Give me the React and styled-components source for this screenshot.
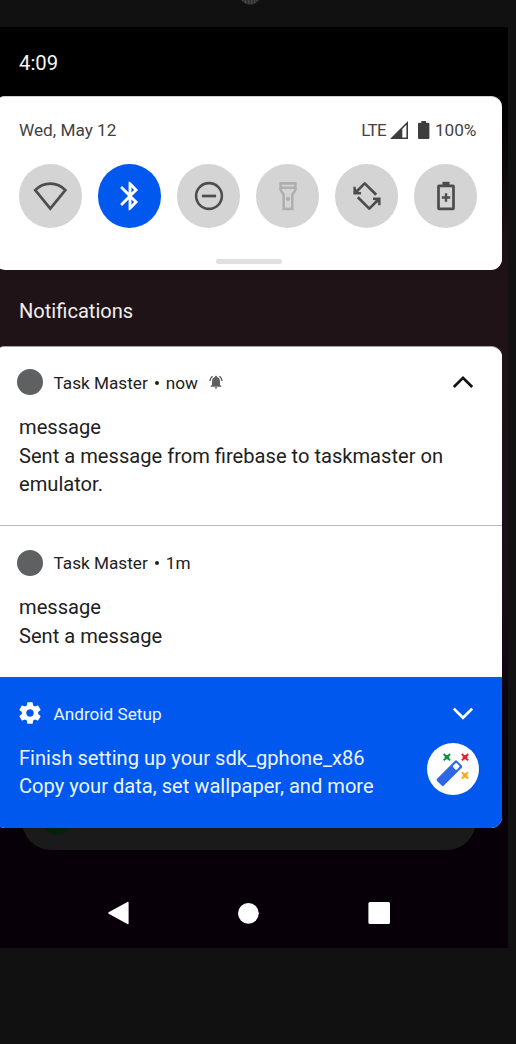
import React from "react";
import styled, { createGlobalStyle } from "styled-components";

const Global = createGlobalStyle`
  *, *::before, *::after { box-sizing: border-box; }
  body { margin: 0; background: #111111; font-family: Roboto, "Liberation Sans", sans-serif; }
  svg { display: block; flex: none; }
`;

const Device = styled.div`
  position: relative;
  width: 516px;
  height: 1044px;
  overflow: hidden;
  background: #111111;
  display: flex;
  flex-direction: column;
`;

const Bezel = styled.div`
  height: 27px;
  flex: none;
  display: flex;
  justify-content: center;
  overflow: hidden;
`;

const Speaker = styled.svg`
  margin-top: -18px;
  margin-left: -16px;
`;

const Screen = styled.main`
  position: relative;
  width: 508px;
  height: 921px;
  flex: none;
  overflow: hidden;
  display: flex;
  flex-direction: column;
  background: linear-gradient(180deg, #000 0, #000 70px, #1a1014 210px, #1f1317 255px, #1f1317 320px, #1a0f18 560px, #0b0310 680px, #070008 790px, #070008 100%);
`;

const StatusBar = styled.header`
  height: 69px;
  flex: none;
  padding: 24px 0 0 19px;
  font-size: 20.3px;
  line-height: 24px;
  color: #f4f4f4;
`;

const Panel = styled.section`
  width: 508px;
  height: 174.4px;
  flex: none;
  margin-left: -6px;
  padding: 21px 25px 0;
  border-radius: 11px;
  border-top: 1px solid #cfcfcf;
  background: #fff;
  display: flex;
  flex-direction: column;
`;

const InfoRow = styled.div`
  display: flex;
  justify-content: space-between;
  height: 24px;
  line-height: 24px;
  font-size: 17.2px;
  color: #424242;
`;

const Indicators = styled.div`
  display: flex;
  align-items: center;
`;

const Network = styled.span`
  font-size: 17px;
  letter-spacing: -0.6px;
  margin-right: 4px;
`;

const Percent = styled.span`
  margin-left: 5.5px;
  margin-right: 0.8px;
  letter-spacing: -0.1px;
`;

const Tiles = styled.div`
  display: flex;
  justify-content: space-between;
  margin-top: 22.3px;
  margin-right: -0.4px;
`;

const Tile = styled.button`
  width: 63.4px;
  height: 63.4px;
  padding: 0;
  border: 0;
  border-radius: 50%;
  display: flex;
  align-items: center;
  justify-content: center;
  background: ${(p) => (p.$active ? "#0058ef" : "#d4d4d4")};
  color: ${(p) => (p.$active ? "#fff" : p.$muted ? "#afafaf" : "#4d4d4d")};
`;

const Handle = styled.div`
  width: 66px;
  height: 4.6px;
  border-radius: 2.3px;
  margin: 31.4px auto 0 197px;
  background: #e0e0e0;
`;

const SectionTitle = styled.h2`
  margin: 0;
  height: 75.6px;
  flex: none;
  padding: 29px 0 0 19px;
  font-size: 20.1px;
  line-height: 24px;
  font-weight: 400;
  color: #f1eef0;
`;

const Stack = styled.section`
  position: relative;
  width: 508px;
  flex: none;
  margin-left: -6px;
  border-radius: 11px;
  border-top: 1px solid #a8a4a6;
  overflow: hidden;
  background: #fff;
`;

const Card = styled.article`
  height: ${(p) => p.$height}px;
  padding: ${(p) => p.$pad || 23}px 25px 0 22.5px;
  color: ${(p) => (p.$accent ? "#eef4ff" : "#212121")};
  background: ${(p) => (p.$accent ? "#0058ef" : "#fff")};
  border-bottom: ${(p) => (p.$divider ? "1px solid #b9b9b9" : "0")};
`;

const CardHeader = styled.div`
  display: flex;
  align-items: center;
  height: 26px;
  font-size: 17.2px;
  line-height: 26px;
`;

const Avatar = styled.span`
  width: 26px;
  height: 26px;
  border-radius: 50%;
  background: #5f6062;
`;

const AppName = styled.span`
  margin-left: 11px;
  padding-top: 1px;
`;

const Bullet = styled.span`
  width: 4px;
  height: 4px;
  margin: 1px 7px 0;
  border-radius: 50%;
  background: #212121;
`;

const Age = styled.span`
  padding-top: 1px;
`;

const Trailing = styled.span`
  margin-left: auto;
  margin-right: 3px;
`;

const CardBody = styled.div`
  display: flex;
  justify-content: space-between;
  margin-top: 17.5px;
  padding-left: 2.5px;
`;

const Message = styled.p`
  margin: 0;
  white-space: pre-line;
  font-size: 20.12px;
  line-height: 28.6px;
`;

const WizardBadge = styled.span`
  width: 52px;
  height: 52px;
  margin-right: -2px;
  margin-top: -1px;
  border-radius: 50%;
  background: #fff;
  display: flex;
  align-items: center;
  justify-content: center;
`;

const SearchDock = styled.div`
  position: absolute;
  left: 22px;
  top: 764px;
  width: 454px;
  height: 58.5px;
  border-radius: 29px;
  background: #1a1a1a;
`;

const DockIcon = styled.span`
  position: absolute;
  left: 20px;
  top: 14px;
  width: 30px;
  height: 30px;
  border-radius: 50%;
  background: #06200f;
`;

const NavBar = styled.nav`
  margin-top: auto;
  height: 70px;
  flex: none;
  display: flex;
  justify-content: space-between;
  padding: 0 118.4px 0 107px;
  align-items: center;
`;

const Icon = ({ size = 34, children }) => (
  <svg width={size} height={size} viewBox="0 0 24 24" fill="none">{children}</svg>
);

const WifiIcon = () => (
  <Icon size={34.6}><path d="M1.55 7.75C4.4 4.7 8.1 3.2 12 3.2s7.6 1.5 10.45 4.55L12 20.6Z" stroke="currentColor" strokeWidth="1.9" /></Icon>
);
const BluetoothIcon = () => (
  <Icon><path fill="currentColor" d="M17.71 7.71 12 2h-1v7.59L6.41 5 5 6.41 10.59 12 5 17.59 6.41 19 11 14.41V22h1l5.71-5.71-4.3-4.29 4.3-4.29zM13 5.83l1.88 1.88L13 9.59V5.83zm1.88 10.46L13 18.17v-3.76l1.88 1.88z" /></Icon>
);
const DndIcon = () => (
  <Icon>
    <circle cx="12" cy="12" r="9.1" stroke="currentColor" strokeWidth="1.8" />
    <path d="M7 12h10" stroke="currentColor" strokeWidth="1.9" />
  </Icon>
);
const TorchIcon = () => (
  <Icon>
    <path d="M6.75 3.1h10.5v4.6l-2.2 3.4v10H8.95v-10l-2.2-3.4Z M6.75 6.2h10.5" stroke="currentColor" strokeWidth="1.8" />
    <circle cx="12" cy="14.1" r="1.5" fill="currentColor" />
  </Icon>
);
const RotateIcon = () => (
  <Icon>
    <path d="m5 8.5 5.4-5.4 8.1 8M19 15.5l-5.4 5.4-8.1-8" stroke="currentColor" strokeWidth="1.9" strokeLinejoin="round" />
    <path d="M2.4 5.5v5.4h5.4V9.2L6.3 9.2 4.1 7V5.5ZM21.6 18.5v-5.4h-5.4v1.7h1.5l2.2 2.2v1.5Z" fill="currentColor" />
  </Icon>
);
const BatterySaverIcon = () => (
  <Icon>
    <path d="M9.5 2h5v2.5h-5z" fill="currentColor" />
    <rect x="6.7" y="4.8" width="10.6" height="16.3" rx=".4" stroke="currentColor" strokeWidth="1.9" />
    <path d="M12 10.1V16M9.05 13.05h5.9" stroke="currentColor" strokeWidth="1.7" />
  </Icon>
);
const SignalIcon = () => (
  <svg width="18" height="18" viewBox="0 0 18 18">
    <path fillRule="evenodd" fill="#3d3d3d" d="M0 18 18 0v18ZM12.3 7.9v8.6h4.1V3.8Z" />
  </svg>
);
const BatteryIcon = () => (
  <svg width="11.4" height="18" viewBox="0 0 11.4 18">
    <path fill="#3d3d3d" d="M3.4 0H8v1.8h2.3q1.1 0 1.1 1.1v14q0 1.1-1.1 1.1H1.1Q0 18 0 16.9v-14Q0 1.8 1.1 1.8h2.3Z" />
  </svg>
);
const BatteryWrap = styled.span`
  margin-left: 10px;
`;
const BellIcon = () => (
  <svg width="16" height="16" viewBox="0 0 24 24">
    <path fill="#606060" d="M7.58 4.08 6.15 2.65C3.75 4.48 2.17 7.3 2.03 10.5h2c.15-2.65 1.51-4.97 3.55-6.42zm12.39 6.42h2c-.15-3.2-1.73-6.02-4.12-7.85l-1.42 1.43c2.02 1.45 3.39 3.77 3.54 6.42zM18 11c0-3.07-1.64-5.64-4.5-6.32V4c0-.83-.67-1.5-1.5-1.5s-1.5.67-1.5 1.5v.68C7.63 5.36 6 7.92 6 11v5l-2 2v1h16v-1l-2-2v-5zm-6 11c1.1 0 2-.9 2-2h-4c0 1.1.9 2 2 2z" />
  </svg>
);
const BellWrap = styled.span`
  margin-left: 10px;
`;
const GearIcon = () => (
  <Icon size={26}>
    <path fill="#fff" d="M19.43 12.98c.04-.32.07-.64.07-.98s-.03-.66-.07-.98l2.11-1.65c.19-.15.24-.42.12-.64l-2-3.46c-.12-.22-.39-.3-.61-.22l-2.49 1c-.52-.4-1.08-.73-1.69-.98l-.38-2.65C14.46 2.18 14.25 2 14 2h-4c-.25 0-.46.18-.49.42l-.38 2.65c-.61.25-1.17.59-1.69.98l-2.49-1c-.23-.09-.49 0-.61.22l-2 3.46c-.13.22-.07.49.12.64l2.11 1.65c-.04.32-.07.65-.07.98s.03.66.07.98l-2.11 1.65c-.19.15-.24.42-.12.64l2 3.46c.12.22.39.3.61.22l2.49-1c.52.4 1.08.73 1.69.98l.38 2.65c.03.24.24.42.49.42h4c.25 0 .46-.18.49-.42l.38-2.65c.61-.25 1.17-.59 1.69-.98l2.49 1c.23.09.49 0 .61-.22l2-3.46c.12-.22.07-.49-.12-.64l-2.11-1.65zM12 15.5c-1.93 0-3.5-1.57-3.5-3.5s1.57-3.5 3.5-3.5 3.5 1.57 3.5 3.5-1.57 3.5-3.5 3.5z" />
  </Icon>
);
const Chevron = ({ up }) => (
  <svg width="22" height="14" viewBox="0 0 22 14" fill="none">
    <path d={up ? "M1.8 12 11 2.8l9.2 9.2" : "M1.8 2.6 11 11.8 20.2 2.6"} stroke={up ? "#111" : "#fff"} strokeWidth="2.7" />
  </svg>
);
const WizardIcon = () => (
  <svg width="52" height="52" viewBox="0 0 52 52" fill="none">
    <g transform="rotate(-45 22.4 30.2)">
      <rect x="8.2" y="25.4" width="28.4" height="9.6" rx="1.6" fill="#2f66e4" />
      <rect x="29.3" y="27.5" width="5.4" height="5.4" rx="1.2" fill="#fff" />
    </g>
    <g strokeWidth="1.9">
      <path d="m16.7 11 6.4 6.4m0-6.4-6.4 6.4" stroke="#0f9240" />
      <path d="m34.8 11 6.4 6.4m0-6.4-6.4 6.4" stroke="#e3202c" />
      <path d="m34.8 29.2 6.4 6.4m0-6.4-6.4 6.4" stroke="#f5ac14" />
    </g>
    <circle cx="19.9" cy="14.2" r="2.3" fill="#0f9240" />
    <circle cx="38" cy="14.2" r="2.3" fill="#e3202c" />
    <circle cx="38" cy="32.4" r="2.3" fill="#f5ac14" />
  </svg>
);

const tiles = [
  { name: "Wi-Fi", Glyph: WifiIcon },
  { name: "Bluetooth", Glyph: BluetoothIcon, active: true },
  { name: "Do Not Disturb", Glyph: DndIcon },
  { name: "Flashlight", Glyph: TorchIcon, muted: true },
  { name: "Auto-rotate", Glyph: RotateIcon },
  { name: "Battery Saver", Glyph: BatterySaverIcon },
];

export default function App() {
  return (
    <Device>
      <Global />
      <Bezel>
        <Speaker width="24" height="24" viewBox="0 0 24 24">
          <circle cx="12" cy="12" r="10.5" fill="#484848" />
          <path d="M6 14v6M9 14v8M12 14v9M15 14v8M18 14v6" stroke="#1c1c1c" strokeWidth="1" />
        </Speaker>
      </Bezel>
      <Screen>
        <SearchDock><DockIcon /></SearchDock>
        <StatusBar>4:09</StatusBar>
        <Panel>
          <InfoRow>
            <span>Wed, May 12</span>
            <Indicators>
              <Network>LTE</Network>
              <SignalIcon />
              <BatteryWrap><BatteryIcon /></BatteryWrap>
              <Percent>100%</Percent>
            </Indicators>
          </InfoRow>
          <Tiles>
            {tiles.map(({ name, Glyph, active, muted }) => (
              <Tile key={name} $active={active} $muted={muted}><Glyph /></Tile>
            ))}
          </Tiles>
          <Handle />
        </Panel>
        <SectionTitle>Notifications</SectionTitle>
        <Stack>
          <Card $height={179.5} $divider $pad={22.5}>
            <CardHeader>
              <Avatar />
              <AppName>Task Master</AppName>
              <Bullet />
              <Age>now</Age>
              <BellWrap><BellIcon /></BellWrap>
              <Trailing><Chevron up /></Trailing>
            </CardHeader>
            <CardBody>
              <Message>{"message\nSent a message from firebase to taskmaster on\nemulator."}</Message>
            </CardBody>
          </Card>
          <Card $height={150.4} $pad={23.4}>
            <CardHeader>
              <Avatar />
              <AppName>Task Master</AppName>
              <Bullet />
              <Age>1m</Age>
            </CardHeader>
            <CardBody>
              <Message>{"message\nSent a message"}</Message>
            </CardBody>
          </Card>
          <Card $height={151} $pad={23.4} $accent>
            <CardHeader>
              <GearIcon />
              <AppName>Android Setup</AppName>
              <Trailing><Chevron /></Trailing>
            </CardHeader>
            <CardBody>
              <Message>{"Finish setting up your sdk_gphone_x86\nCopy your data, set wallpaper, and more"}</Message>
              <WizardBadge><WizardIcon /></WizardBadge>
            </CardBody>
          </Card>
        </Stack>
        <NavBar>
          <svg width="22" height="24" viewBox="0 0 22 24"><path d="M2 12 20.8 1.6v20.8Z" fill="#fff" stroke="#fff" strokeWidth="1.6" strokeLinejoin="round" /></svg>
          <svg width="22" height="22" viewBox="0 0 22 22"><circle cx="11.4" cy="11.3" r="10.4" fill="#fff" /></svg>
          <svg width="22" height="22" viewBox="0 0 22 22"><rect x=".4" width="21.6" height="22" rx="1.6" fill="#fff" /></svg>
        </NavBar>
      </Screen>
    </Device>
  );
}
